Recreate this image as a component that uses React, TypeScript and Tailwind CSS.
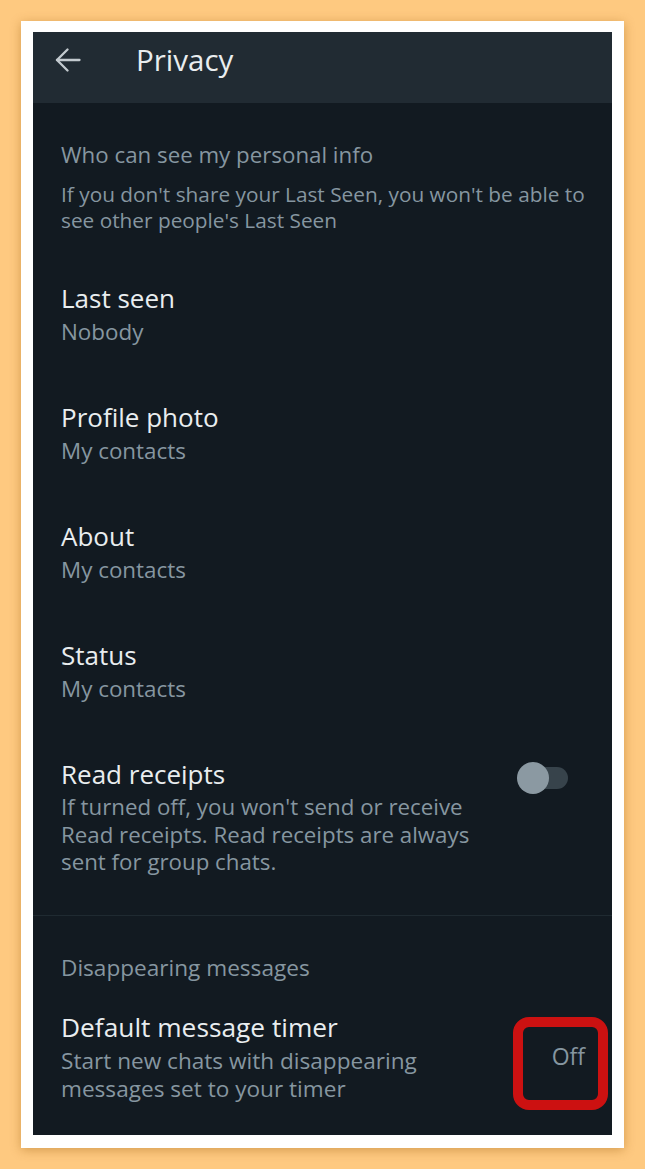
const font = { fontFamily: '"Open Sans", "Noto Sans", sans-serif' }

const items = [
  { title: 'Last seen', value: 'Nobody' },
  { title: 'Profile photo', value: 'My contacts' },
  { title: 'About', value: 'My contacts' },
  { title: 'Status', value: 'My contacts' },
]

function BackArrow() {
  return (
    <svg width="26" height="24" viewBox="0 0 26 24" fill="none" stroke="#c3cacf" strokeWidth="2.3" strokeLinecap="round" strokeLinejoin="round">
      <path d="M24.5 12H2" />
      <path d="M12.5 1.5L2 12l10.5 10.5" />
    </svg>
  )
}

function Toggle() {
  return (
    <div className="relative w-[51px] h-[32px] shrink-0 mt-[4px]">
      <div className="absolute right-0 top-[5px] w-[38px] h-[22px] rounded-full bg-[#37434b]" />
      <div className="absolute left-0 top-0 w-[32px] h-[32px] rounded-full bg-[#8b99a2]" />
    </div>
  )
}

export default function App() {
  return (
    <div className="w-[645px] h-[1169px] bg-[#fec980] pt-[21px] pl-[21px]" style={font}>
      <div className="w-[603px] h-[1127px] bg-white pt-[11px] pl-[12px] shadow-[0_2px_10px_rgba(160,100,20,0.45)]">
        <div className="relative w-[579px] h-[1103px] bg-[#121a21] flex flex-col">
          {/* top bar */}
          <div className="h-[71px] bg-[#212b33] flex items-start pl-[22px] pt-[9px]">
            <div className="mt-[7px]">
              <BackArrow />
            </div>
            <span className="ml-[55px] text-[29.5px] leading-[38px] text-[#e9edef]">Privacy</span>
          </div>

          <div className="pl-[28px] pr-[20px] pt-[39px]">
            <p className="text-[22.3px] leading-[26px] text-[#8696a0]">Who can see my personal info</p>
            <p className="mt-[13px] text-[20.8px] leading-[26px] text-[#8696a0]">
              If you don't share your Last Seen, you won't be able to see other people's Last Seen
            </p>

            <div className="mt-[49px] flex flex-col gap-[55px]">
              {items.map((item) => (
                <div key={item.title}>
                  <p className="text-[26px] leading-[32px] text-[#e9edef]">{item.title}</p>
                  <p className="mt-[4px] text-[22.4px] leading-[28px] text-[#8696a0]">{item.value}</p>
                </div>
              ))}

              <div className="flex justify-between pr-[24px]">
                <div className="max-w-[430px]">
                  <p className="text-[26px] leading-[32px] text-[#e9edef]">Read receipts</p>
                  <p className="mt-[3px] text-[22.3px] leading-[27.5px] text-[#8696a0]">
                    If turned off, you won't send or receive Read receipts. Read receipts are always sent for group chats.
                  </p>
                </div>
                <Toggle />
              </div>
            </div>
          </div>

          <div className="mt-[39px] h-px bg-[#1f2a31]" />

          <div className="pl-[28px] pr-[27px] pt-[39px]">
            <p className="text-[22.6px] leading-[26px] text-[#8696a0]">Disappearing messages</p>
            <div className="mt-[30px] flex justify-between">
              <div>
                <p className="text-[26.3px] leading-[32px] text-[#e9edef]">Default message timer</p>
                <p className="mt-[4px] max-w-[400px] text-[22.6px] leading-[28px] text-[#8696a0]">
                  Start new chats with disappearing messages set to your timer
                </p>
              </div>
              <span className="mt-[31px] text-[23px] leading-[28px] text-[#8696a0]">Off</span>
            </div>
          </div>

          {/* annotation box */}
          <div className="absolute right-[4px] bottom-[25px] w-[95px] h-[93px] rounded-[16px] border-[10px] border-[#cc1111]" />
        </div>
      </div>
    </div>
  )
}
